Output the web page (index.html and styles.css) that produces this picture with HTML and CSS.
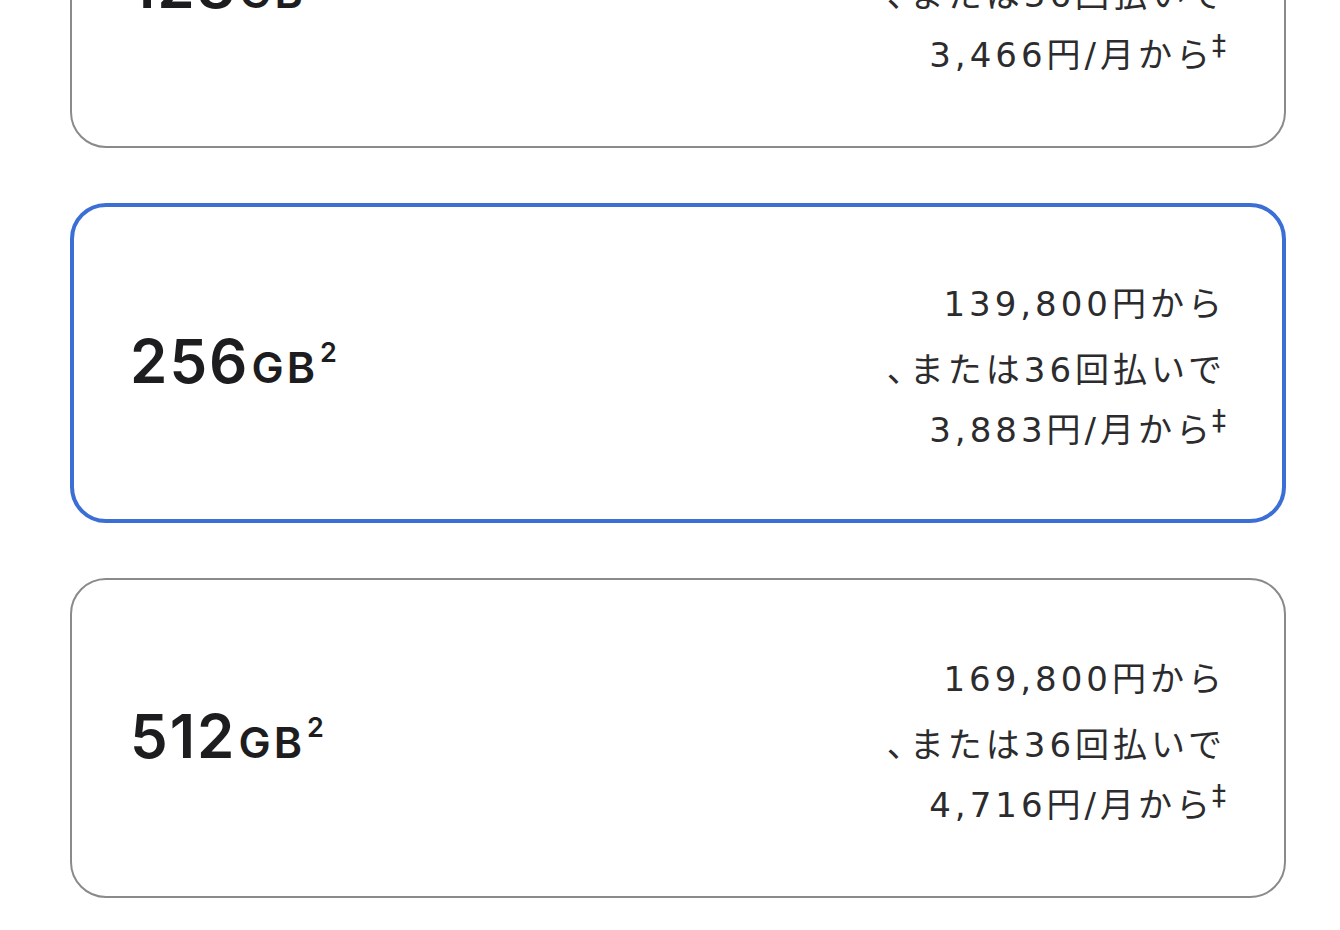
FILE: index.html
```html
<!DOCTYPE html>
<html lang="ja">

<head>
  <meta charset="UTF-8" />
  <meta name="viewport" content="width=device-width, initial-scale=1.0" />
  <title>ストレージ</title>
  <link rel="stylesheet" href="styles.css">
</head>

<body>
  <div class="options">
    <div class="option">
      <p class="capacity">128<span class="unit">GB</span><sup class="note">2</sup></p>
      <div class="price">
        <p class="price-line">119,800円から</p>
        <p class="price-line"><span class="comma">、</span>または36回払いで</p>
        <p class="price-line">3,466円/月から<sup class="mark">‡</sup></p>
      </div>
    </div>

    <div class="option option-selected">
      <p class="capacity">256<span class="unit">GB</span><sup class="note">2</sup></p>
      <div class="price">
        <p class="price-line">139,800円から</p>
        <p class="price-line"><span class="comma">、</span>または36回払いで</p>
        <p class="price-line">3,883円/月から<sup class="mark">‡</sup></p>
      </div>
    </div>

    <div class="option">
      <p class="capacity">512<span class="unit">GB</span><sup class="note">2</sup></p>
      <div class="price">
        <p class="price-line">169,800円から</p>
        <p class="price-line"><span class="comma">、</span>または36回払いで</p>
        <p class="price-line">4,716円/月から<sup class="mark">‡</sup></p>
      </div>
    </div>
  </div>
</body>

</html>
```

FILE: styles.css
```css
/* Reset */
p {
  margin: 0;
}

body {
  margin: 0;
  background-color: white;
  font-family: Inter, "Noto Sans CJK JP", sans-serif;
  overflow: hidden;
}

/* Option list */
.options {
  display: flex;
  flex-direction: column;
  gap: 55px;
  width: 1216px;
  margin: -172px 0 0 70px;
}

.option {
  box-sizing: border-box;
  height: 320px;
  border: 2px solid #8a8a8a;
  border-radius: 36px;
  display: flex;
  align-items: center;
  justify-content: space-between;
  padding: 0 58px 0 58px;
}

.option-selected {
  border: 4px solid #3b6fd6;
  padding: 0 56px 0 56px;
}

/* Capacity */
.capacity {
  color: #1d1d1f;
  font-size: 60px;
  font-weight: 600;
  letter-spacing: 2px;
  line-height: 1;
  margin-top: -4px;
}

.unit {
  font-size: 43px;
  letter-spacing: 3px;
  margin-left: 2px;
}

.note {
  font-size: 27px;
  vertical-align: 21px;
  line-height: 0;
  letter-spacing: 0;
  margin-left: 2px;
}

/* Price */
.price {
  text-align: right;
  color: #2c2c2e;
  font-family: "DejaVu Sans", "Noto Sans CJK JP", sans-serif;
  font-size: 34px;
  letter-spacing: 4px;
  margin-top: 8px;
}

.price-line {
  line-height: 63px;
  height: 63px;
}

.comma {
  font-family: "Noto Sans CJK JP", sans-serif;
  letter-spacing: 0;
  margin-right: -11px;
}

.mark {
  font-size: 28px;
  vertical-align: 12px;
  letter-spacing: 0;
  line-height: 0;
  margin-left: -2px;
}
```
